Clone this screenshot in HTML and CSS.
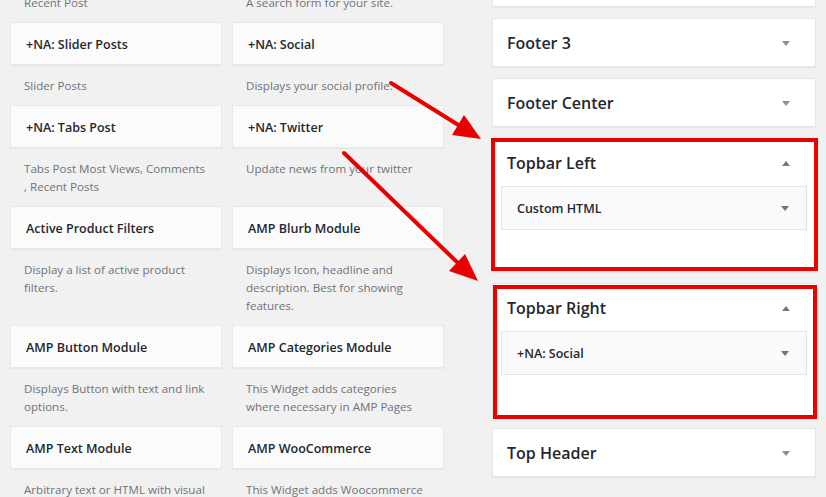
FILE: index.html
```html
<!DOCTYPE html>
<html>
<head>
<meta charset="utf-8">
<link rel="stylesheet" href="styles.css">
</head>
<body>
<div class="page">
  <div class="available">
    <div class="widget"><div class="w-top">+NA: Recent Posts</div><div class="w-desc">Recent Post</div></div>
    <div class="widget"><div class="w-top">Search</div><div class="w-desc">A search form for your site.</div></div>

    <div class="widget"><div class="w-top">+NA: Slider Posts</div><div class="w-desc">Slider Posts</div></div>
    <div class="widget"><div class="w-top">+NA: Social</div><div class="w-desc">Displays your social profile.</div></div>

    <div class="widget"><div class="w-top">+NA: Tabs Post</div><div class="w-desc">Tabs Post Most Views, Comments<br>, Recent Posts</div></div>
    <div class="widget"><div class="w-top">+NA: Twitter</div><div class="w-desc">Update news from your twitter</div></div>

    <div class="widget"><div class="w-top">Active Product Filters</div><div class="w-desc">Display a list of active product<br>filters.</div></div>
    <div class="widget"><div class="w-top">AMP Blurb Module</div><div class="w-desc">Displays Icon, headline and<br>description. Best for showing<br>features.</div></div>

    <div class="widget"><div class="w-top">AMP Button Module</div><div class="w-desc">Displays Button with text and link<br>options.</div></div>
    <div class="widget"><div class="w-top">AMP Categories Module</div><div class="w-desc">This Widget adds categories<br>where necessary in AMP Pages</div></div>

    <div class="widget"><div class="w-top">AMP Text Module</div><div class="w-desc">Arbitrary text or HTML with visual<br>editor.</div></div>
    <div class="widget"><div class="w-top">AMP WooCommerce</div><div class="w-desc">This Widget adds Woocommerce<br>products in AMP Pages</div></div>
  </div>

  <div class="sidebars">
    <div class="sidebar"><div class="sb-head"><span>Footer 2</span><i class="tri-down"></i></div></div>
    <div class="sidebar"><div class="sb-head"><span>Footer 3</span><i class="tri-down"></i></div></div>
    <div class="sidebar"><div class="sb-head"><span>Footer Center</span><i class="tri-down"></i></div></div>
    <div class="sidebar open">
      <div class="sb-head"><span>Topbar Left</span><i class="tri-up"></i></div>
      <div class="sb-widget"><span>Custom HTML</span><i class="tri-down dark"></i></div>
    </div>
    <div class="sidebar open">
      <div class="sb-head"><span>Topbar Right</span><i class="tri-up"></i></div>
      <div class="sb-widget"><span>+NA: Social</span><i class="tri-down dark"></i></div>
    </div>
    <div class="sidebar"><div class="sb-head"><span>Top Header</span><i class="tri-down"></i></div></div>
  </div>
</div>

<svg class="annotations" width="826" height="497" viewBox="0 0 826 497" xmlns="http://www.w3.org/2000/svg">
  <rect x="493" y="140" width="323" height="129" fill="none" stroke="#e80000" stroke-width="4"/>
  <rect x="495" y="287" width="320" height="130" fill="none" stroke="#e80000" stroke-width="4"/>
  <line x1="391" y1="83" x2="460" y2="126" stroke="#e80000" stroke-width="4" stroke-linecap="round"/>
  <polygon points="481,139 452,135 464,115" fill="#e80000"/>
  <line x1="344" y1="153" x2="459" y2="264" stroke="#e80000" stroke-width="4" stroke-linecap="round"/>
  <polygon points="478,281 449,271 465,254" fill="#e80000"/>
</svg>
</body>
</html>
```

FILE: styles.css
```css
html, body {
  margin: 0;
  padding: 0;
}
body {
  width: 826px;
  height: 497px;
  overflow: hidden;
  background: #f1f1f1;
  font-family: "Open Sans", "Noto Sans", "Liberation Sans", sans-serif;
  color: #23282d;
  position: relative;
}
.page {
  display: flex;
  align-items: flex-start;
}
.available {
  margin-left: 10px;
  margin-top: -61px;
  display: grid;
  grid-template-columns: 212px 212px;
  column-gap: 10px;
  align-items: start;
}
.widget {
  display: flex;
  flex-direction: column;
}
.w-top {
  box-sizing: border-box;
  height: 43px;
  background: #fbfbfb;
  border: 1px solid #e8e8e8;
  box-shadow: 0 1px 1px rgba(0,0,0,.04);
  padding: 1px 15px 0;
  display: flex;
  align-items: center;
  font-size: 12.5px;
  font-weight: 600;
  color: #23282d;
  white-space: nowrap;
}
.w-desc {
  padding: 12px 14px 10px;
  font-size: 11.6px;
  line-height: 18px;
  color: #6f7378;
  white-space: nowrap;
}
.sidebars {
  margin-left: 48px;
  margin-top: -42px;
  width: 324px;
  display: flex;
  flex-direction: column;
  gap: 11px;
}
.sidebar {
  box-sizing: border-box;
  background: #fff;
  border: 1px solid #e5e5e5;
  box-shadow: 0 1px 1px rgba(0,0,0,.04);
}
.sidebar.open {
  height: 134px;
}
.sb-head {
  box-sizing: border-box;
  height: 47px;
  display: flex;
  align-items: center;
  justify-content: space-between;
  padding: 1px 25px 0 14px;
  font-size: 16px;
  font-weight: 600;
  color: #23282d;
}
.sb-widget {
  box-sizing: border-box;
  height: 44px;
  margin: 0 8px;
  background: #fafafa;
  border: 1px solid #e5e5e5;
  display: flex;
  align-items: center;
  justify-content: space-between;
  padding: 1px 17px 0 15px;
  font-size: 12.5px;
  font-weight: 600;
}
.tri-down, .tri-up {
  display: block;
  width: 0;
  height: 0;
  border-left: 4px solid transparent;
  border-right: 4px solid transparent;
}
.tri-down {
  border-top: 5px solid #8c8f94;
}
.tri-down.dark {
  border-top-color: #72777c;
}
.tri-up {
  border-bottom: 5px solid #72777c;
}
.annotations {
  position: absolute;
  left: 0;
  top: 0;
  pointer-events: none;
}
```
